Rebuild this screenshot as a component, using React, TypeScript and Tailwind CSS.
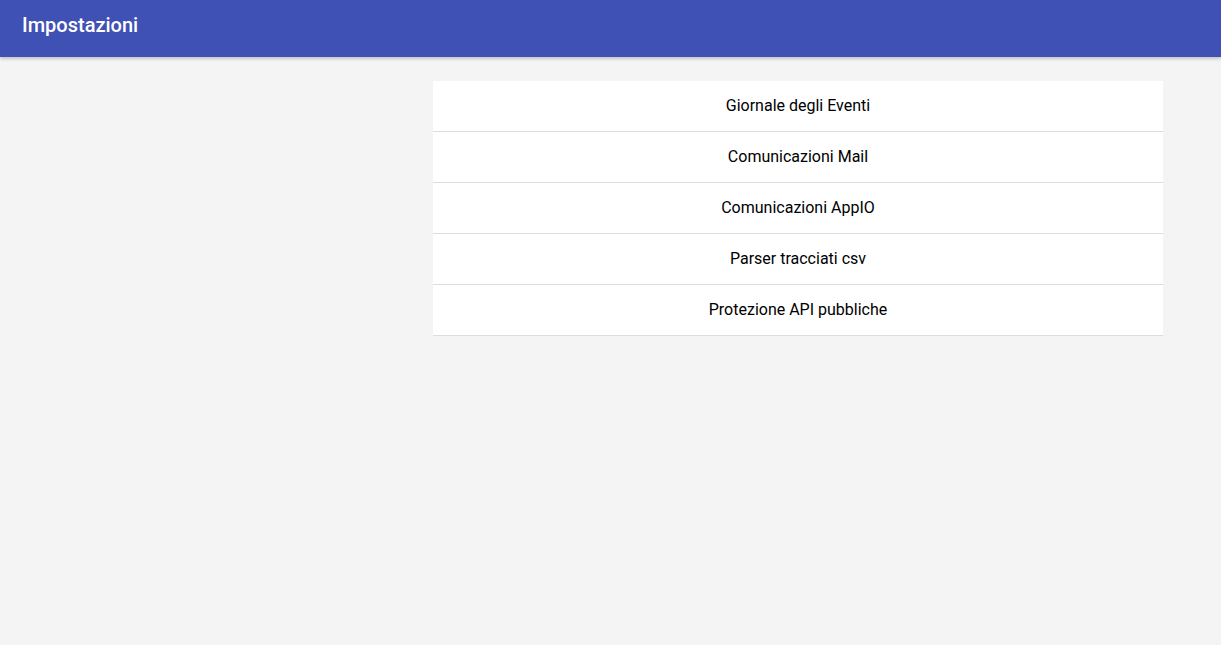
const items = [
  'Giornale degli Eventi',
  'Comunicazioni Mail',
  'Comunicazioni AppIO',
  'Parser tracciati csv',
  'Protezione API pubbliche',
];

export default function App() {
  return (
    <div className="min-h-screen bg-[#f4f4f4] font-['Roboto',sans-serif]">
      {/* Top bar */}
      <header className="h-[57px] bg-[#3f51b5] flex items-center px-[22px] shadow-[0_2px_3px_rgba(0,0,0,0.2)]">
        <h1 className="text-white text-[20px] font-medium leading-none pb-[7px]">Impostazioni</h1>
      </header>

      <div className="flex pt-6">
        <div className="w-[433px] shrink-0" />
        <ul className="w-[730px] bg-white">
          {items.map((item) => (
            <li
              key={item}
              className="h-[51px] flex items-center justify-center border-b border-[#dddddd] text-[16px] text-black"
            >
              {item}
            </li>
          ))}
        </ul>
      </div>
    </div>
  );
}
